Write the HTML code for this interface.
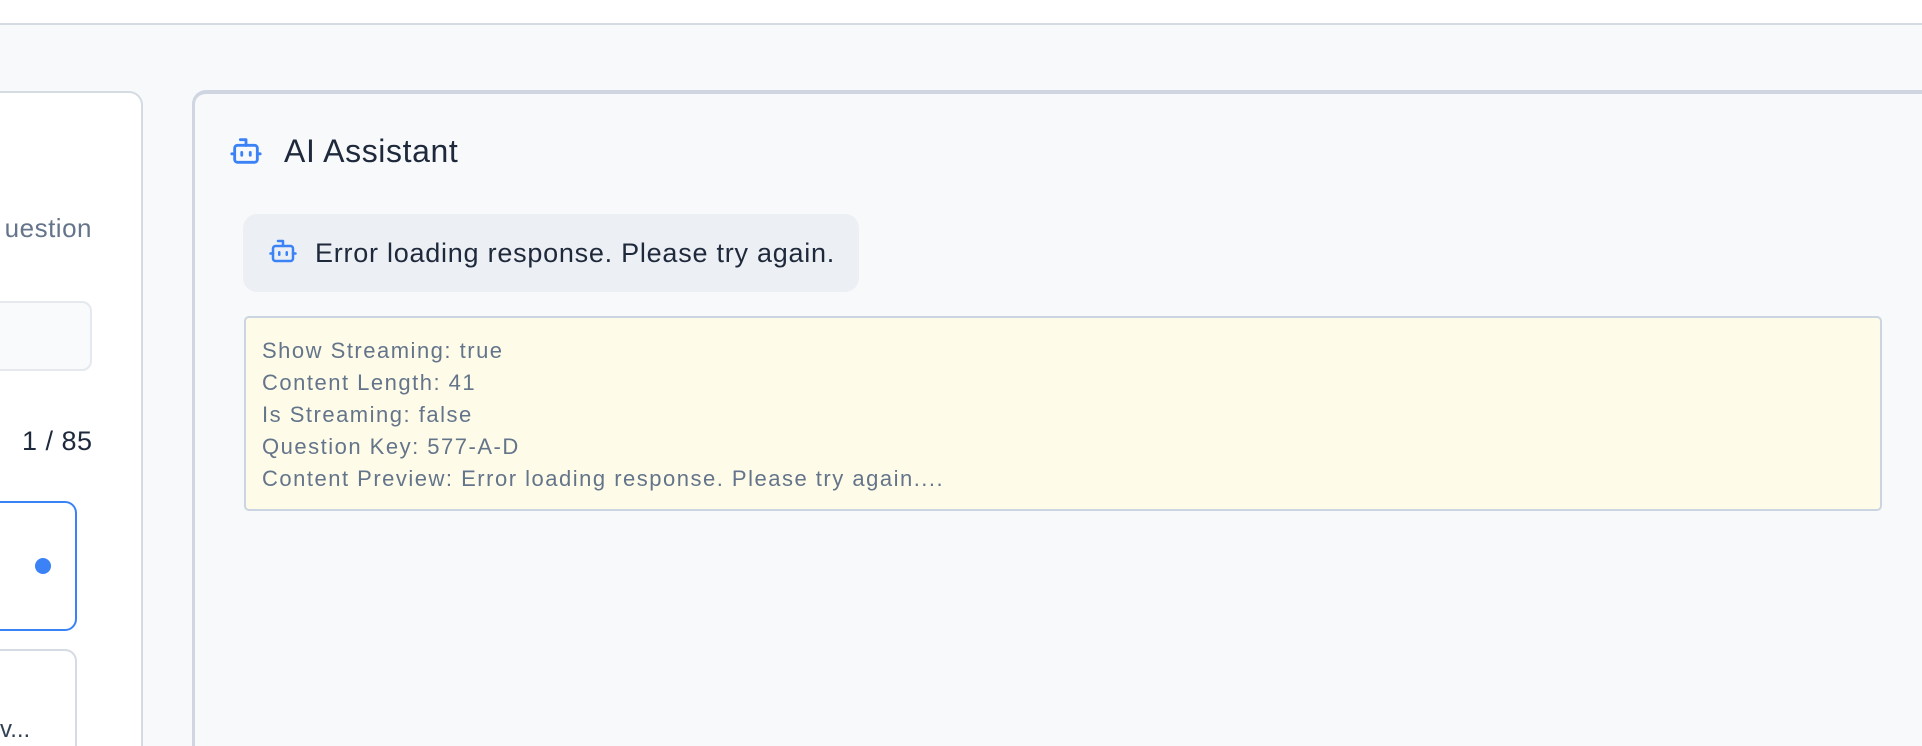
<!DOCTYPE html>
<html><head><style>
*{box-sizing:border-box;margin:0;padding:0}
html,body{width:1922px;height:746px;overflow:hidden}
body{background:#f8f9fb;font-family:"Liberation Sans",sans-serif}
#w{position:relative;width:1922px;height:746px;overflow:hidden}
.top{position:absolute;left:0;top:0;width:1922px;height:25px;background:#fff;border-bottom:2px solid #d5dbe3}
.lc{position:absolute;left:-40px;top:91px;width:183px;height:655px;background:#fff;border:2px solid #d5dbe3;border-bottom:none;border-radius:14px 14px 0 0}
.rc{position:absolute;left:192px;top:90px;width:1730px;height:656px;background:#f8f9fb;border:2px solid #cfd6e1;border-top-width:4px;border-left-width:3px;border-right:none;border-bottom:none;border-radius:14px 0 0 0}
.t{position:absolute;white-space:nowrap}
</style></head><body><div id="w">
<div class="top"></div>
<div class="lc"></div>
<div class="t" style="left:0;top:213px;font-size:26px;color:#64748b;width:92px;overflow:hidden;direction:rtl;letter-spacing:0.5px">uestion</div>
<div style="position:absolute;left:-20px;top:301px;width:112px;height:70px;border:2px solid #e5e9ef;border-radius:10px;background:#f8fafc"></div>
<div class="t" style="left:22px;top:426px;font-size:27px;color:#1e293b;letter-spacing:0.5px">1 / 85</div>
<div style="position:absolute;left:-20px;top:501px;width:97px;height:130px;border:2px solid #3b82f6;border-radius:12px;background:#fff"></div>
<div style="position:absolute;left:35px;top:558px;width:16px;height:16px;border-radius:50%;background:#3b82f6"></div>
<div style="position:absolute;left:-20px;top:649px;width:97px;height:97px;border:2px solid #d5dbe3;border-bottom:none;border-radius:12px 12px 0 0;background:#fff"></div>
<div class="t" style="left:0;top:716px;font-size:24px;color:#334155">v...</div>
<div class="rc"></div>
<svg style="position:absolute;left:229px;top:134px" width="34" height="34" viewBox="0 0 24 24" fill="none" stroke="#3b82f6" stroke-width="2" stroke-linecap="round" stroke-linejoin="round"><path d="M12 8V4H8"/><rect x="4" y="8" width="16" height="12" rx="2"/><path d="M2 14h2M20 14h2M15 13v2M9 13v2"/></svg>
<div class="t" style="left:284px;top:133px;font-size:32px;color:#1e293b;letter-spacing:0.6px">AI Assistant</div>
<div style="position:absolute;left:243px;top:214px;width:616px;height:78px;background:#eceff3;border-radius:14px"></div>
<svg style="position:absolute;left:268px;top:236px" width="30" height="30" viewBox="0 0 24 24" fill="none" stroke="#3b82f6" stroke-width="2" stroke-linecap="round" stroke-linejoin="round"><path d="M12 8V4H8"/><rect x="4" y="8" width="16" height="12" rx="2"/><path d="M2 14h2M20 14h2M15 13v2M9 13v2"/></svg>
<div class="t" style="left:315px;top:238px;font-size:27px;color:#1e293b;letter-spacing:0.75px">Error loading response. Please try again.</div>
<div style="position:absolute;left:244px;top:316px;width:1638px;height:195px;background:#fefce8;border:2px solid #cbd5e1;border-radius:5px;padding:17px 0 0 16px;font-size:22px;line-height:32px;color:#64748b;letter-spacing:1.5px;white-space:nowrap">
Show Streaming: true<br>Content Length: 41<br>Is Streaming: false<br>Question Key: 577-A-D<br>Content Preview: Error loading response. Please try again....
</div>
</div></body></html>
